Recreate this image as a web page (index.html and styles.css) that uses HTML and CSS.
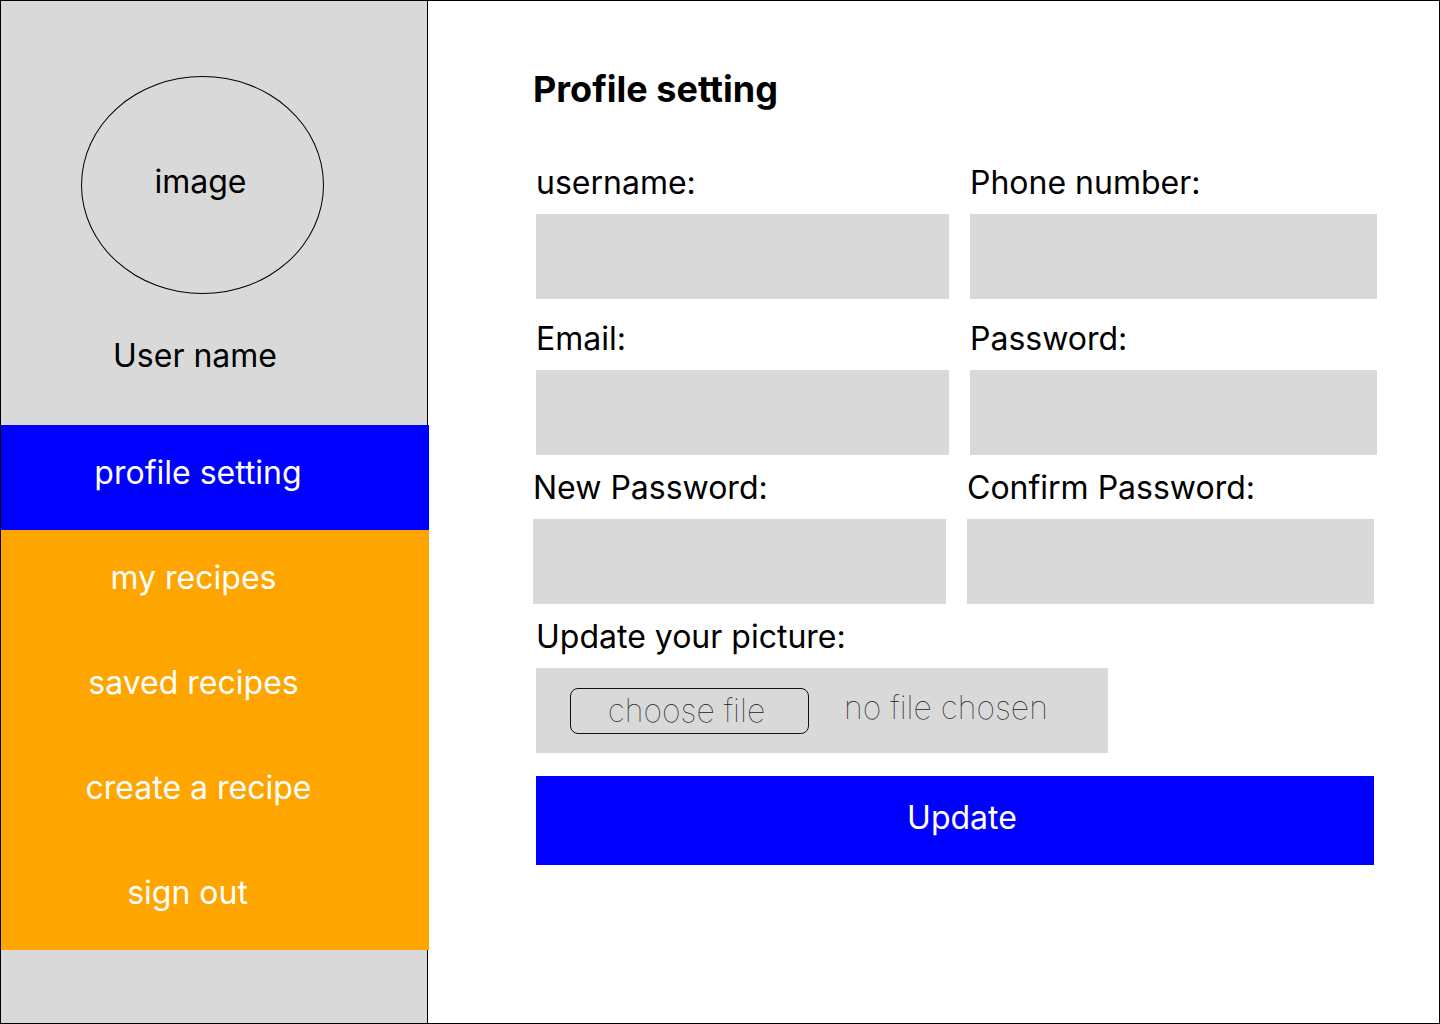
FILE: index.html
```html
<!DOCTYPE html>
<html lang="en">
<head>
<meta charset="utf-8">
<title>Profile setting</title>
<link rel="stylesheet" href="styles.css">
</head>
<body>
<div class="frame">
  <aside class="sidebar">
    <div class="sidebar-head">
      <div class="avatar"><span class="avatar-text">image</span></div>
      <div class="user-name">User name</div>
    </div>
    <nav class="nav">
      <a class="nav-item nav-active">profile setting</a>
      <a class="nav-item">my recipes</a>
      <a class="nav-item">saved recipes</a>
      <a class="nav-item">create a recipe</a>
      <a class="nav-item">sign out</a>
    </nav>
  </aside>
  <main class="main">
    <h1 class="title">Profile setting</h1>
    <div class="row row-first">
      <div class="field">
        <label class="label">username:</label>
        <input class="input" type="text">
      </div>
      <div class="field">
        <label class="label">Phone number:</label>
        <input class="input" type="text">
      </div>
    </div>
    <div class="row row-second">
      <div class="field">
        <label class="label">Email:</label>
        <input class="input" type="text">
      </div>
      <div class="field">
        <label class="label">Password:</label>
        <input class="input" type="password">
      </div>
    </div>
    <div class="row row-third">
      <div class="field">
        <label class="label">New Password:</label>
        <input class="input" type="password">
      </div>
      <div class="field">
        <label class="label">Confirm Password:</label>
        <input class="input" type="password">
      </div>
    </div>
    <div class="picture">
      <label class="label">Update your picture:</label>
      <div class="file-box">
        <span class="choose">choose file</span>
        <span class="no-file">no file chosen</span>
      </div>
    </div>
    <button class="update" type="button">Update</button>
  </main>
</div>
</body>
</html>
```
FILE: styles.css
```css
* { box-sizing: border-box; }
html, body { margin: 0; padding: 0; background: #fff; }
body { font-family: Inter, "Noto Sans", sans-serif; color: #000; }

.frame {
  width: 1440px;
  height: 1024px;
  border: 1px solid #000;
  display: flex;
}

.sidebar {
  width: 427px;
  flex: none;
  background: #d9d9d9;
  border-right: 1px solid #000;
  display: flex;
  flex-direction: column;
}

.sidebar-head {
  height: 424px;
  padding-top: 75px;
}

.avatar {
  width: 243px;
  height: 218px;
  margin-left: 80px;
  border: 1px solid #000;
  border-radius: 50%;
  display: flex;
  justify-content: center;
  padding-top: 87px;
}
.avatar-text {
  font-size: 32px;
  line-height: 36px;
  margin-right: 4px;
}

.user-name {
  margin-top: 44px;
  font-size: 32px;
  line-height: 36px;
  text-align: center;
  padding-right: 38px;
}

.nav {
  display: flex;
  flex-direction: column;
  margin-right: -2px;
}
.nav-item {
  height: 105px;
  background: #ffa500;
  color: #fff;
  font-size: 32px;
  line-height: 36px;
  display: flex;
  align-items: center;
  justify-content: center;
  padding-right: 40px;
  padding-bottom: 9px;
}
.nav-active { background: #0000ff; }
.nav-item:nth-child(1) { padding-right: 34px; }
.nav-item:nth-child(2) { padding-right: 43px; }
.nav-item:nth-child(3) { padding-right: 43px; }
.nav-item:nth-child(4) { padding-right: 33px; }
.nav-item:nth-child(5) { padding-right: 55px; }

.main {
  flex: 1;
  padding-left: 108px;
  padding-top: 66px;
}

.title {
  margin: 2px 0 54px -3px;
  font-size: 36px;
  line-height: 40px;
  font-weight: 700;
}

.row {
  display: grid;
  grid-template-columns: 413px 407px;
  column-gap: 21px;
}
.row-second { margin-top: 20px; }
.row-third { margin-top: 13px; margin-left: -3px; }

.label {
  display: block;
  font-size: 32px;
  line-height: 36px;
  padding-top: 2px;
  margin-bottom: 13px;
}

.input {
  display: block;
  width: 100%;
  height: 85px;
  border: 0;
  padding: 0;
  margin: 0;
  background: #d9d9d9;
}

.picture { margin-top: 13px; }

.file-box {
  width: 572px;
  height: 85px;
  background: #d9d9d9;
  display: flex;
  align-items: center;
  padding-left: 34px;
  font-family: Inter, "Noto Sans", sans-serif;
  font-weight: 100;
  font-size: 32px;
  color: #222;
}
.choose {
  width: 239px;
  height: 46px;
  border: 1px solid #111;
  border-radius: 8px;
  display: flex;
  align-items: center;
  justify-content: center;
  padding-right: 6px;
  line-height: 1;
}
.no-file {
  margin-left: 35px;
  margin-bottom: 6px;
  line-height: 1;
}

.update {
  display: flex;
  align-items: center;
  justify-content: center;
  margin-top: 23px;
  width: 838px;
  height: 89px;
  border: 0;
  background: #0000ff;
  color: #fff;
  font-family: Inter, "Noto Sans", sans-serif;
  font-size: 32px;
  padding: 0 0 6px 14px;
}
```
